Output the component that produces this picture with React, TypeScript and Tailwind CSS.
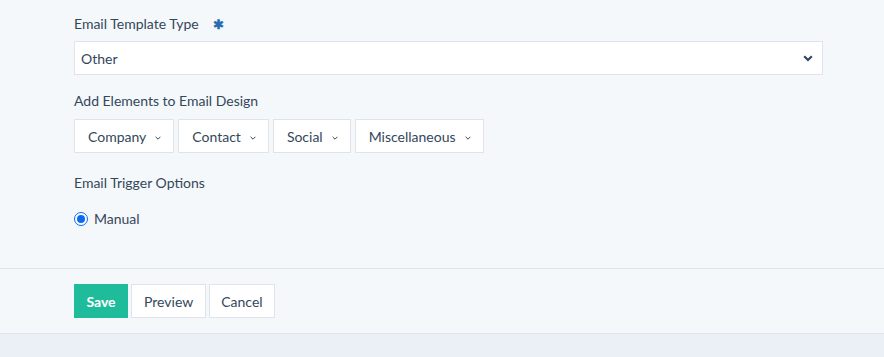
const font = { fontFamily: "Lato, 'Open Sans', sans-serif" };

function Caret() {
  return (
    <svg width="6" height="4" viewBox="0 0 6 4" fill="none" className="mt-[3px] text-[#33475b]">
      <path d="M0.6 0.8 L3 3.2 L5.4 0.8" stroke="currentColor" strokeWidth="1" />
    </svg>
  );
}

function Dropdown({ label }: { label: string }) {
  return (
    <button className="flex h-[34px] items-center gap-[9px] border border-[#dfe3eb] bg-white pl-[13px] pr-[12px] text-[14px] text-[#33475b]">
      {label}
      <Caret />
    </button>
  );
}

export default function App() {
  return (
    <div className="min-h-[357px] bg-[#eaf0f6] text-[#33475b]" style={font}>
      <div className="bg-[#f5f8fa] px-[74px] pt-[15px] pb-[40px]">
        <div className="flex items-center gap-[14px] text-[14px] leading-[18px]">
          <span>Email Template Type</span>
          <span className="text-[13px] font-bold text-[#2b6cb0]">✱</span>
        </div>
        <div className="mt-[8px] flex h-[34px] w-[749px] items-center justify-between border border-[#dfe3eb] bg-white pl-[6px] pr-[9px] text-[14px]">
          <span>Other</span>
          <svg width="10" height="7" viewBox="0 0 10 7" fill="none" className="text-[#33475b]">
            <path d="M1.2 1.3 L5 5 L8.8 1.3" stroke="currentColor" strokeWidth="2.2" />
          </svg>
        </div>

        <div className="mt-[17px] text-[14px] leading-[18px]">Add Elements to Email Design</div>
        <div className="mt-[9px] flex gap-[4px]">
          <Dropdown label="Company" />
          <Dropdown label="Contact" />
          <Dropdown label="Social" />
          <Dropdown label="Miscellaneous" />
        </div>

        <div className="mt-[21px] text-[14px] leading-[18px]">Email Trigger Options</div>
        <label className="mt-[18px] flex items-center gap-[6px] text-[14px] leading-[18px]">
          <span className="flex h-[14px] w-[14px] items-center justify-center rounded-full border-[1.5px] border-[#0a6cf5] bg-white">
            <span className="h-[8px] w-[8px] rounded-full bg-[#0a6cf5]" />
          </span>
          Manual
        </label>
      </div>

      <div className="border-t border-b border-[#dfe3eb] bg-[#f5f8fa] px-[74px] pt-[15px] pb-[15px]">
        <div className="flex gap-[3px] text-[14px]">
          <button className="h-[34px] w-[54px] bg-[#1fbc9c] font-bold text-white">Save</button>
          <button className="h-[34px] border border-[#dfe3eb] bg-white px-[12px]">Preview</button>
          <button className="h-[34px] border border-[#dfe3eb] bg-white px-[11px]">Cancel</button>
        </div>
      </div>
    </div>
  );
}
